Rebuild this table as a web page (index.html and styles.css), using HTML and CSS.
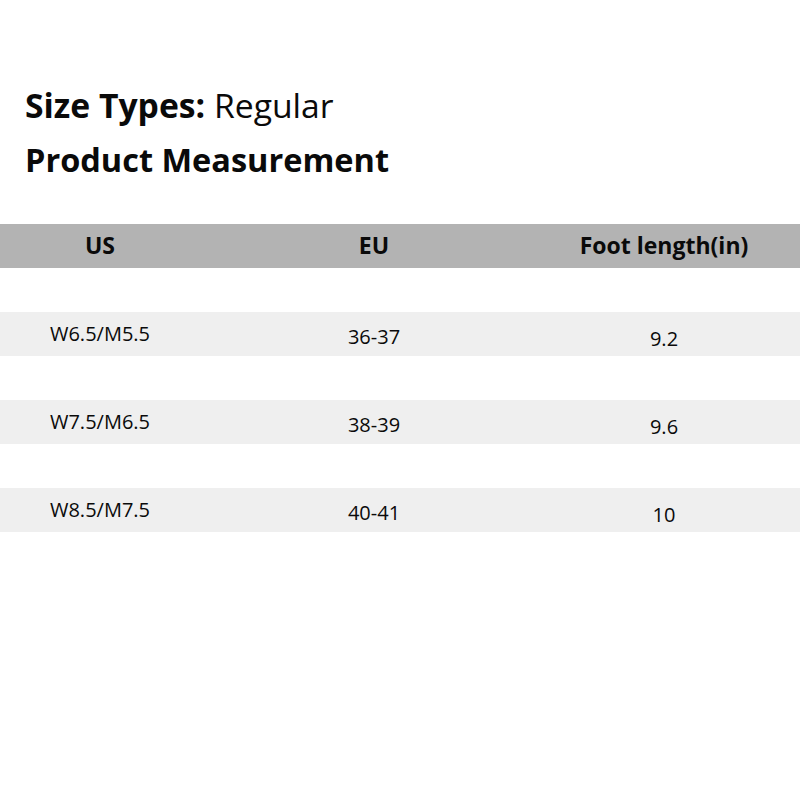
FILE: index.html
```html
<!DOCTYPE html>
<html>
<head>
<meta charset="utf-8">
<link rel="stylesheet" href="styles.css">
</head>
<body>
<div class="titles">
  <div class="t1"><b>Size Types:</b> Regular</div>
  <div class="t2">Product Measurement</div>
</div>
<div class="table">
  <div class="row head"><div class="c c1">US</div><div class="c c2">EU</div><div class="c c3">Foot length(in)</div></div>
  <div class="row blank"></div>
  <div class="row gray"><div class="c c1">W6.5/M5.5</div><div class="c c2">36-37</div><div class="c c3">9.2</div></div>
  <div class="row blank"></div>
  <div class="row gray"><div class="c c1">W7.5/M6.5</div><div class="c c2">38-39</div><div class="c c3">9.6</div></div>
  <div class="row blank"></div>
  <div class="row gray"><div class="c c1">W8.5/M7.5</div><div class="c c2">40-41</div><div class="c c3">10</div></div>
</div>
</body>
</html>
```

FILE: styles.css
```css
html, body { margin: 0; padding: 0; background: #fff; }
body { font-family: "Open Sans", "Noto Sans", sans-serif; color: #0a0a0a; width: 800px; height: 800px; }
.titles { padding: 78px 0 0 25px; height: 224px; box-sizing: border-box; }
.t1 { font-size: 33.7px; line-height: 54px; font-weight: 400; }
.t1 b { font-weight: 700; }
.t2 { font-size: 32.5px; line-height: 56px; font-weight: 700; }
.table { display: flex; flex-direction: column; }
.row { height: 44px; display: grid; grid-template-columns: 200px 348px 232px; align-items: center; }
.head { background: #b3b3b3; font-weight: 700; font-size: 23px; }
.gray { background: #efefef; font-size: 20px; }
.c { text-align: center; }
.head .c { padding-bottom: 2px; }
.gray .c1 { padding-bottom: 2px; }
.gray .c2 { padding-top: 4px; }
.gray .c3 { padding-top: 8px; }
```
